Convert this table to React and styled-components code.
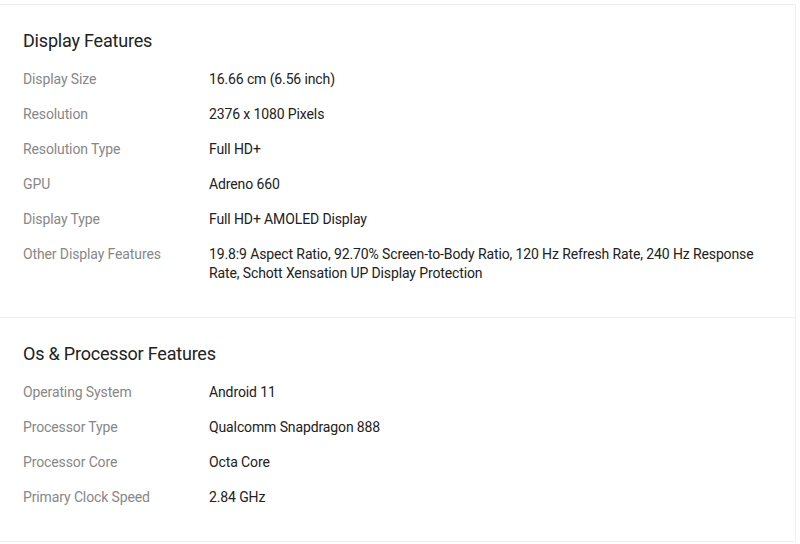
import React from "react";
import styled, { createGlobalStyle } from "styled-components";

const Global = createGlobalStyle`
  html, body { margin: 0; padding: 0; background: #fff; }
  body { font-family: Roboto, "Liberation Sans", Arial, sans-serif; }
`;

const Page = styled.div`
  padding-top: 4px;
  width: 796px;
`;

const Card = styled.div`
  border-top: 1px solid #f0f0f0;
  border-right: 1px solid #f0f0f0;
  background: #fff;
`;

const Section = styled.section`
  padding: 24px 24px 26px 23px;
  border-bottom: 1px solid #f0f0f0;
`;

const Heading = styled.h2`
  margin: 0 0 9px;
  font-size: 18px;
  font-weight: 400;
  line-height: 24px;
  letter-spacing: -0.2px;
  color: #212121;
`;

const Row = styled.div`
  display: grid;
  grid-template-columns: 186px 1fr;
  padding: 8px 0;
  font-size: 14px;
  line-height: 19px;
  letter-spacing: -0.12px;
`;

const Label = styled.div`
  color: #878787;
  padding-right: 8px;
`;

const Value = styled.div`
  color: #212121;
`;

const sections = [
  {
    title: "Display Features",
    rows: [
      ["Display Size", "16.66 cm (6.56 inch)"],
      ["Resolution", "2376 x 1080 Pixels"],
      ["Resolution Type", "Full HD+"],
      ["GPU", "Adreno 660"],
      ["Display Type", "Full HD+ AMOLED Display"],
      [
        "Other Display Features",
        "19.8:9 Aspect Ratio, 92.70% Screen-to-Body Ratio, 120 Hz Refresh Rate, 240 Hz Response Rate, Schott Xensation UP Display Protection",
      ],
    ],
  },
  {
    title: "Os & Processor Features",
    rows: [
      ["Operating System", "Android 11"],
      ["Processor Type", "Qualcomm Snapdragon 888"],
      ["Processor Core", "Octa Core"],
      ["Primary Clock Speed", "2.84 GHz"],
    ],
  },
];

export default function App() {
  return (
    <Page>
      <Global />
      <Card>
        {sections.map((s) => (
          <Section key={s.title}>
            <Heading>{s.title}</Heading>
            {s.rows.map(([l, v]) => (
              <Row key={l}>
                <Label>{l}</Label>
                <Value>{v}</Value>
              </Row>
            ))}
          </Section>
        ))}
      </Card>
    </Page>
  );
}
